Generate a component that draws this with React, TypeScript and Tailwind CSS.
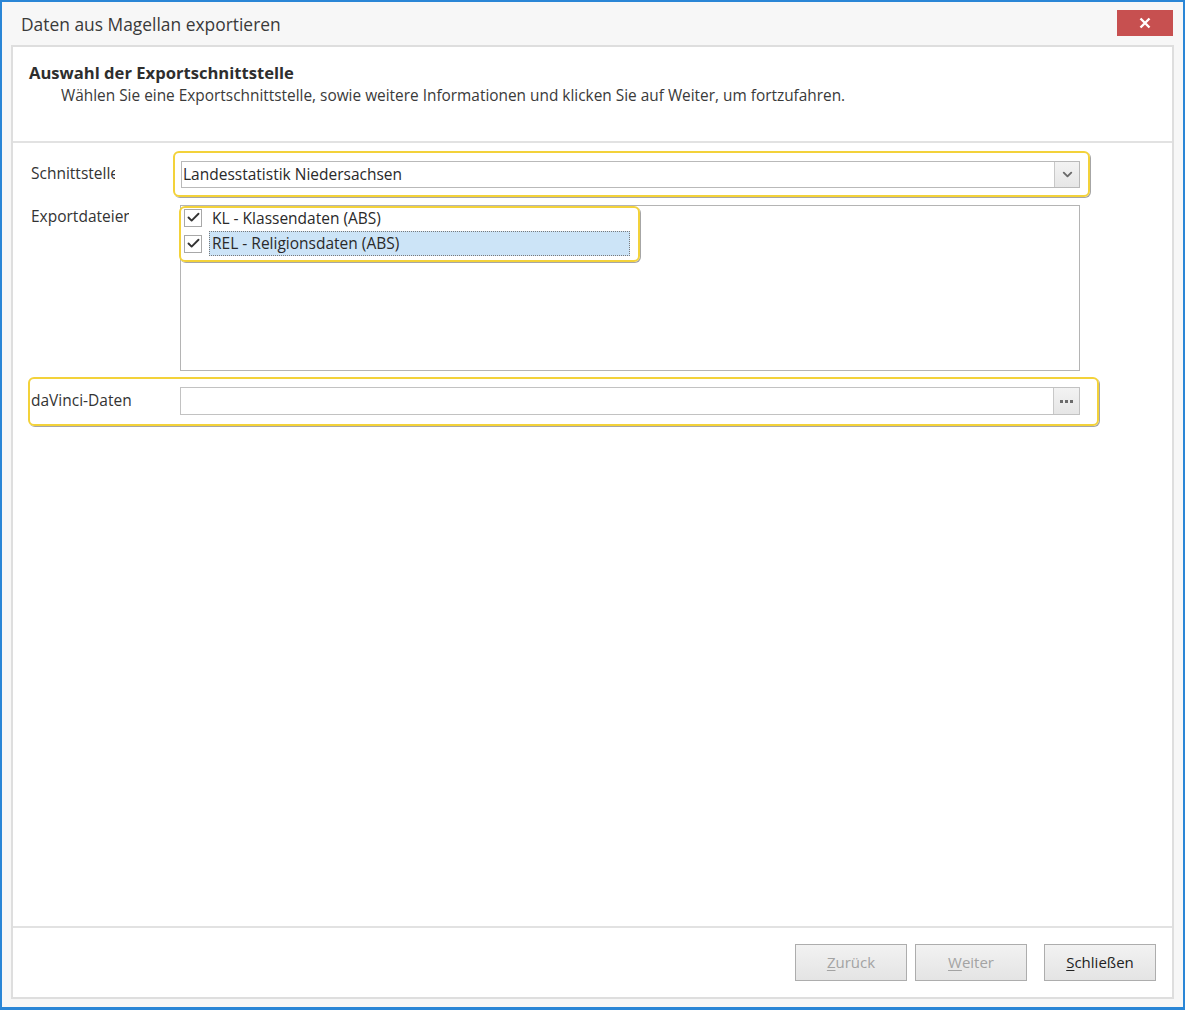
import { Check, ChevronDown } from 'lucide-react'

const font = { fontFamily: '"Open Sans", "Noto Sans", sans-serif' }

function Highlight({ className }: { className: string }) {
  return (
    <div
      className={`absolute rounded-[6px] border-2 border-[#f3d23a] shadow-[1px_1px_0_rgba(0,0,0,0.35)] pointer-events-none ${className}`}
    />
  )
}

function Checkbox() {
  return (
    <div className="w-[18px] h-[18px] border border-[#a8a8a8] bg-white flex items-center justify-center shrink-0">
      <Check size={15} strokeWidth={3} className="text-[#333]" />
    </div>
  )
}

function DialogButton({ label, disabled }: { label: string; disabled?: boolean }) {
  return (
    <button
      className={`w-[112px] h-[37px] border border-[#adadad] bg-gradient-to-b from-[#f2f2f2] to-[#e4e4e4] text-[15px] ${
        disabled ? 'text-[#a3a3a3]' : 'text-[#222]'
      }`}
    >
      <span className="underline underline-offset-2">{label[0]}</span>
      {label.slice(1)}
    </button>
  )
}

export default function App() {
  return (
    <div
      style={font}
      className="w-[1185px] h-[1010px] bg-[#f7f7f7] border-l-2 border-r-2 border-t-2 border-b-[3px] border-[#2a86d6] flex flex-col text-[#333]"
    >
      {/* Titelleiste */}
      <div className="h-[43px] flex items-start justify-between pl-[19px] pr-[10px] shrink-0">
        <span className="text-[17.4px] leading-[24px] mt-[10px] text-[#3a3a3a]">
          Daten aus Magellan exportieren
        </span>
        <button className="mt-[8px] w-[56px] h-[26px] bg-[#c75050] flex items-center justify-center">
          <svg width="12" height="12" viewBox="0 0 12 12">
            <path d="M1.5 1.5 L10.5 10.5 M10.5 1.5 L1.5 10.5" stroke="white" strokeWidth="2.4" />
          </svg>
        </button>
      </div>

      {/* Panel */}
      <div className="mx-[9px] h-[954px] border-2 border-[#dedede] bg-white flex flex-col shrink-0">
        {/* Kopf */}
        <div className="h-[96px] border-b-2 border-[#e2e2e2] pl-[16px] pt-[16px] shrink-0">
          <div className="text-[16.6px] leading-[20px] font-bold text-[#2e2e2e]">
            Auswahl der Exportschnittstelle
          </div>
          <div className="ml-[32px] mt-[3px] text-[15.4px] leading-[20px] text-[#3a3a3a]">
            Wählen Sie eine Exportschnittstelle, sowie weitere Informationen und klicken Sie auf Weiter, um fortzufahren.
          </div>
        </div>

        {/* Inhalt */}
        <div className="relative flex-1 pt-[18px] pl-[18px] text-[15.5px]">
          <div className="flex items-start">
            <div className="w-[84px] overflow-hidden whitespace-nowrap leading-[22px] mt-[1px]">Schnittstelle</div>
            <div className="ml-[66px] w-[899px] h-[27px] border border-[#b9b9b9] flex">
              <div className="flex-1 pl-[1px] leading-[25px] text-[#2a2a2a]">Landesstatistik Niedersachsen</div>
              <div className="w-[25px] border-l border-[#c8c8c8] bg-gradient-to-b from-[#f3f3f3] to-[#e6e6e6] flex items-center justify-center">
                <ChevronDown size={15} strokeWidth={3} className="text-[#6b6b6b]" />
              </div>
            </div>
          </div>

          <div className="flex items-start mt-[17px]">
            <div className="w-[98px] overflow-hidden whitespace-nowrap leading-[22px]">Exportdateien</div>
            <div className="ml-[51px] w-[900px] h-[166px] border border-[#b4b4b4] pl-[3px]">
              <div className="flex items-center h-[23px]">
                <Checkbox />
                <span className="ml-[10px] leading-[22px] text-[#2a2a2a]">KL - Klassendaten (ABS)</span>
              </div>
              <div className="flex items-center h-[27px] mt-[1px]">
                <Checkbox />
                <span className="ml-[7px] w-[421px] h-[25px] pl-[2px] bg-[#cce4f7] border border-dotted border-[#7a7a7a] leading-[23px] text-[#2a2a2a]">
                  REL - Religionsdaten (ABS)
                </span>
              </div>
            </div>
          </div>

          <div className="flex items-center mt-[16px]">
            <div className="w-[149px] whitespace-nowrap leading-[22px] -mt-[2px]">daVinci-Daten</div>
            <div className="w-[900px] h-[28px] border border-[#c2c2c2] flex">
              <div className="flex-1" />
              <div className="w-[26px] border-l border-[#c8c8c8] bg-gradient-to-b from-[#f3f3f3] to-[#e6e6e6] flex items-center justify-center gap-[2px]">
                <span className="w-[3px] h-[3px] bg-[#6b6b6b]" />
                <span className="w-[3px] h-[3px] bg-[#6b6b6b]" />
                <span className="w-[3px] h-[3px] bg-[#6b6b6b]" />
              </div>
            </div>
          </div>

          {/* Markierungen */}
          <Highlight className="left-[160px] top-[8px] w-[917px] h-[46px]" />
          <Highlight className="left-[166px] top-[63px] w-[461px] h-[56px]" />
          <Highlight className="left-[15px] top-[234px] w-[1071px] h-[49px]" />
        </div>

        {/* Fuß */}
        <div className="h-[71px] border-t-2 border-[#e2e2e2] flex items-start justify-end pt-[16px] pr-[16px] shrink-0">
          <DialogButton label="Zurück" disabled />
          <div className="ml-[8px]">
            <DialogButton label="Weiter" disabled />
          </div>
          <div className="ml-[17px]">
            <DialogButton label="Schließen" />
          </div>
        </div>
      </div>
    </div>
  )
}
